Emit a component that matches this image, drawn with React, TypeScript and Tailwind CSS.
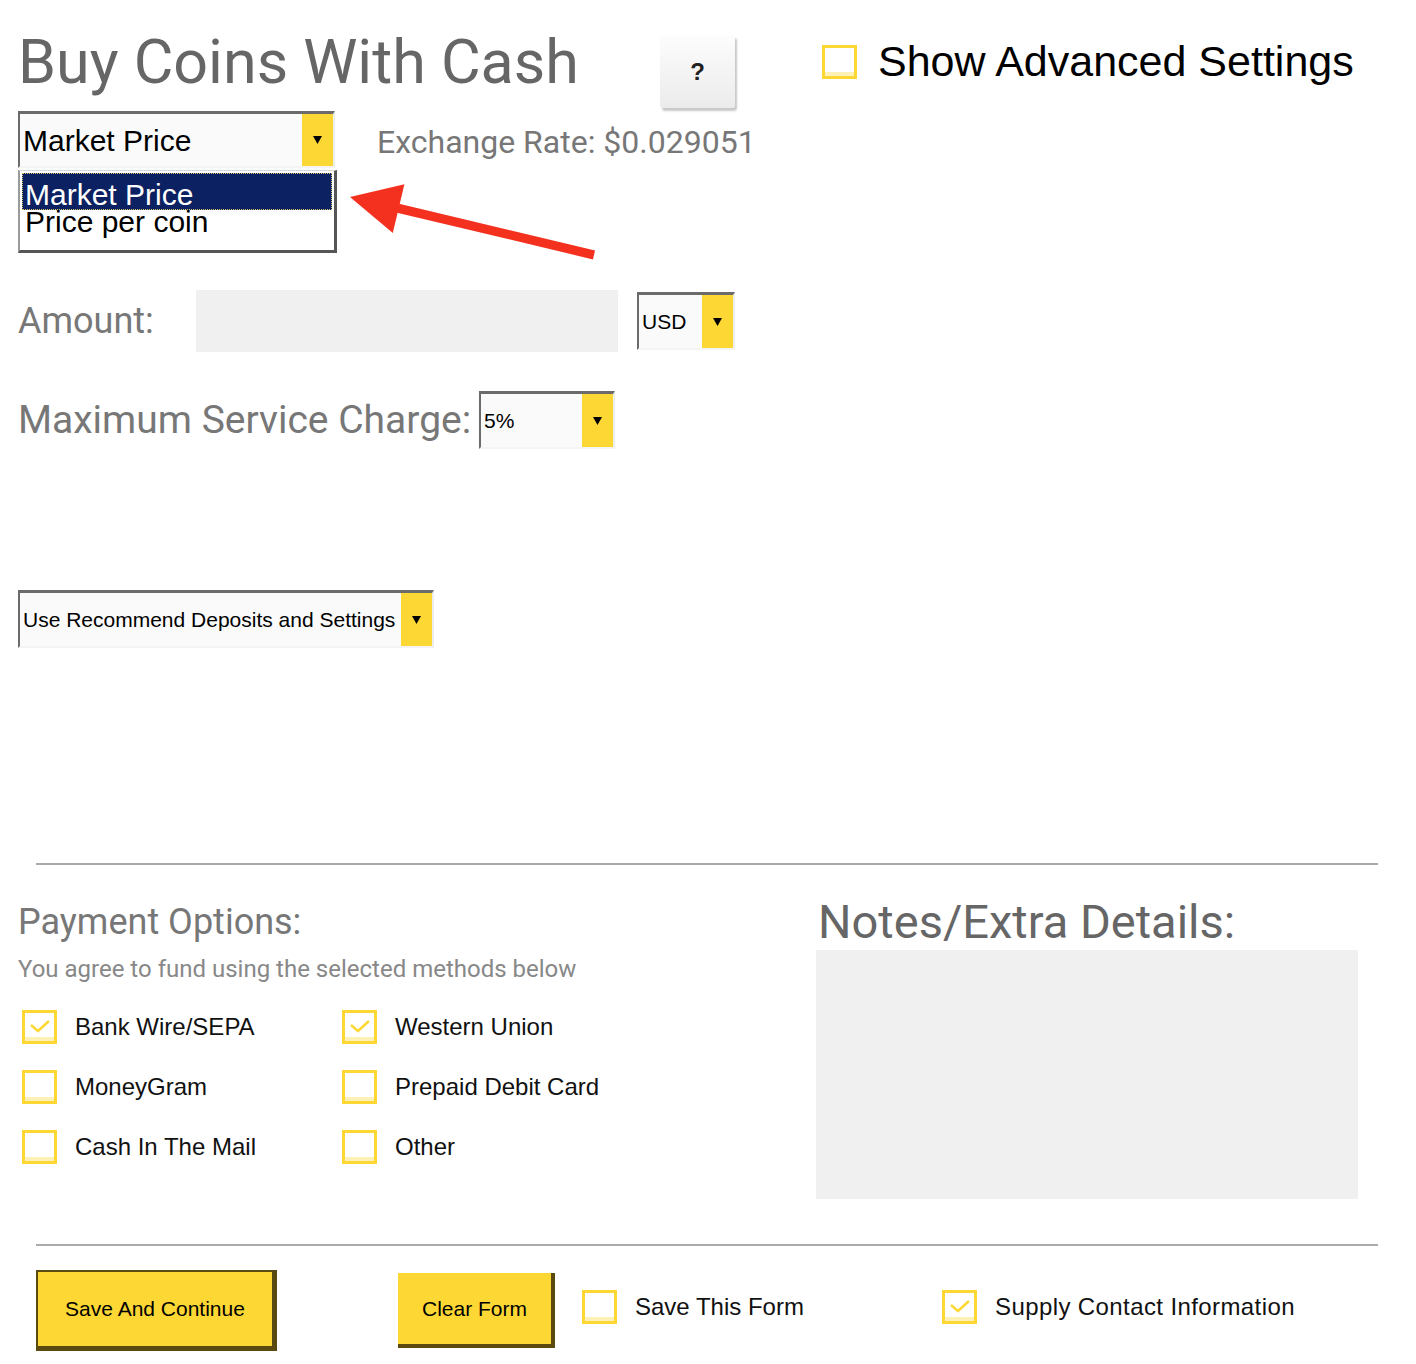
import React from 'react';

const sans = "font-['Liberation_Sans',Arial,sans-serif]";

const Caret = () => (
  <svg width="9" height="10" viewBox="0 0 9 10">
    <path d="M0 1h9L4.5 9z" fill="#000" />
  </svg>
);

interface SelectProps {
  value: string;
  className: string;
  text: string;
}

// Fake select: dark inset top/left edge, yellow caret block on the right
const Select: React.FC<SelectProps> = ({ value, className, text }) => (
  <div
    className={`flex items-stretch bg-[#fafafa] border-t-[3px] border-l-2 border-r-2 border-b-2 border-t-[#6b6b6b] border-l-[#6b6b6b] border-r-[#ededed] border-b-[#f4f4f4] ${className}`}
  >
    <span className={`flex-1 flex items-center pl-[3px] whitespace-nowrap text-black ${sans} ${text}`}>{value}</span>
    <span className="w-[31px] bg-[#fdd835] flex items-center justify-center">
      <Caret />
    </span>
  </div>
);

const Box: React.FC<{ checked?: boolean }> = ({ checked }) => (
  <span className="w-[35px] h-[34px] shrink-0 flex border-[3px] border-[#fdd835] bg-white shadow-[inset_0_-4px_0_#fdf1b8]">
    {checked && (
      <svg width="29" height="28" viewBox="0 0 29 28">
        <path d="M6 12L13 18L24 8" fill="none" stroke="#fdd835" strokeWidth="2.5" />
      </svg>
    )}
  </span>
);

const Option: React.FC<{ label: string; checked?: boolean }> = ({ label, checked }) => (
  <label className="flex items-center gap-[18px]">
    <Box checked={checked} />
    <span className={`text-[24px] leading-none text-[#111] ${sans}`}>{label}</span>
  </label>
);

export default function App() {
  return (
    <div className="relative w-full min-h-[1364px] bg-white pl-[18px] pt-[32px] font-['Roboto',sans-serif]">
      {/* Title row */}
      <div className="flex items-start">
        <h1 className="w-[642px] text-[61px] leading-none font-normal text-[#666]">Buy Coins With Cash</h1>
        <button
          className={`mt-[3px] w-[75px] h-[73px] rounded-[3px] bg-linear-to-b from-[#fdfdfd] to-[#ebebeb] shadow-[2px_3px_2px_#c9c9c9] text-[24px] font-bold text-[#222] ${sans}`}
        >
          ?
        </button>
        <label className="ml-[87px] mt-[8px] flex items-center gap-[21px]">
          <Box />
          <span className={`text-[43px] leading-none text-black ${sans}`}>Show Advanced Settings</span>
        </label>
      </div>

      {/* Price type */}
      <div className="mt-[3px] flex items-start">
        <Select value="Market Price" className="w-[317px] h-[57px]" text="text-[30px]" />
        <span className="ml-[42px] mt-[15px] text-[32px] leading-none text-[#777]">Exchange Rate: $0.029051</span>
      </div>

      {/* Amount */}
      <div className="mt-[122px] flex items-center">
        <span className="w-[178px] text-[36px] leading-none text-[#777]">Amount:</span>
        <input readOnly className="w-[422px] h-[62px] bg-[#f0f0f0] outline-none" />
        <Select value="USD" className="ml-[19px] w-[98px] h-[58px]" text="text-[21px]" />
      </div>

      {/* Service charge */}
      <div className="mt-[39px] flex items-center">
        <span className="w-[461px] whitespace-nowrap text-[39px] leading-none text-[#777]">Maximum Service Charge:</span>
        <Select value="5%" className="w-[136px] h-[58px]" text="text-[21px]" />
      </div>

      <div className="mt-[141px] flex">
        <Select value="Use Recommend Deposits and Settings" className="w-[416px] h-[58px]" text="text-[21px]" />
      </div>

      <div className="mt-[215px] ml-[18px] w-[1342px] h-[2px] bg-[#aaa]" />

      {/* Payment + notes */}
      <div className="mt-[34px] flex">
        <div className="w-[798px]">
          <div className="mt-[5px] text-[36px] leading-none text-[#777]">Payment Options:</div>
          <div className="mt-[17px] text-[24px] leading-none text-[#888]">
            You agree to fund using the selected methods below
          </div>
          <div className="mt-[29px] ml-[4px] grid grid-cols-[320px_320px] gap-y-[26px]">
            <Option label="Bank Wire/SEPA" checked />
            <Option label="Western Union" checked />
            <Option label="MoneyGram" />
            <Option label="Prepaid Debit Card" />
            <Option label="Cash In The Mail" />
            <Option label="Other" />
          </div>
        </div>
        <div className="w-[542px]">
          <div className="ml-[2px] -mt-[1px] text-[47px] leading-none text-[#666]">Notes/Extra Details:</div>
          <textarea readOnly className="mt-[5px] block w-[542px] h-[249px] bg-[#f0f0f0] resize-none outline-none" />
        </div>
      </div>

      <div className="mt-[45px] ml-[18px] w-[1342px] h-[2px] bg-[#aaa]" />

      {/* Actions */}
      <div className="mt-[24px] ml-[18px] flex items-start">
        <button
          className={`w-[241px] h-[81px] bg-[#fdd835] border-t-2 border-l-2 border-r-[5px] border-b-[5px] border-[#5a4a0f] text-[21px] text-black ${sans}`}
        >
          Save And Continue
        </button>
        <button
          className={`ml-[121px] mt-[3px] w-[157px] h-[75px] bg-[#fdd835] border-r-[4px] border-b-[4px] border-[#5a4a0f] text-[21px] text-black ${sans}`}
        >
          Clear Form
        </button>
        <label className="ml-[27px] mt-[20px] w-[360px] flex items-center gap-[18px]">
          <Box />
          <span className={`text-[24px] leading-none text-[#111] ${sans}`}>Save This Form</span>
        </label>
        <label className="mt-[20px] flex items-center gap-[18px]">
          <Box checked />
          <span className={`text-[24px] tracking-[0.4px] leading-none text-[#111] ${sans}`}>Supply Contact Information</span>
        </label>
      </div>

      {/* Open dropdown list */}
      <div
        className={`absolute left-[18px] top-[170px] w-[319px] h-[83px] bg-white border-t border-l-2 border-r-[3px] border-b-[3px] border-t-[#d8d8d8] border-l-[#9a9a9a] border-r-[#555] border-b-[#555] pt-[2px] px-[2px] text-[30px] text-black ${sans}`}
      >
        <div className="h-[37px] leading-[43px] pl-[3px] bg-[#0c2161] text-white outline-1 outline-dotted outline-[#e0c068] -outline-offset-1">
          Market Price
        </div>
        <div className="-mt-[2px] leading-[27px] pl-[3px]">Price per coin</div>
      </div>

      {/* Red pointer arrow */}
      <svg className="absolute left-[340px] top-[170px]" width="270" height="100" viewBox="0 0 270 100">
        <line x1="57" y1="38" x2="254" y2="85" stroke="#f4311f" strokeWidth="9" />
        <polygon points="10,27 64.4,14.3 52.8,62.9" fill="#f4311f" />
      </svg>
    </div>
  );
}
